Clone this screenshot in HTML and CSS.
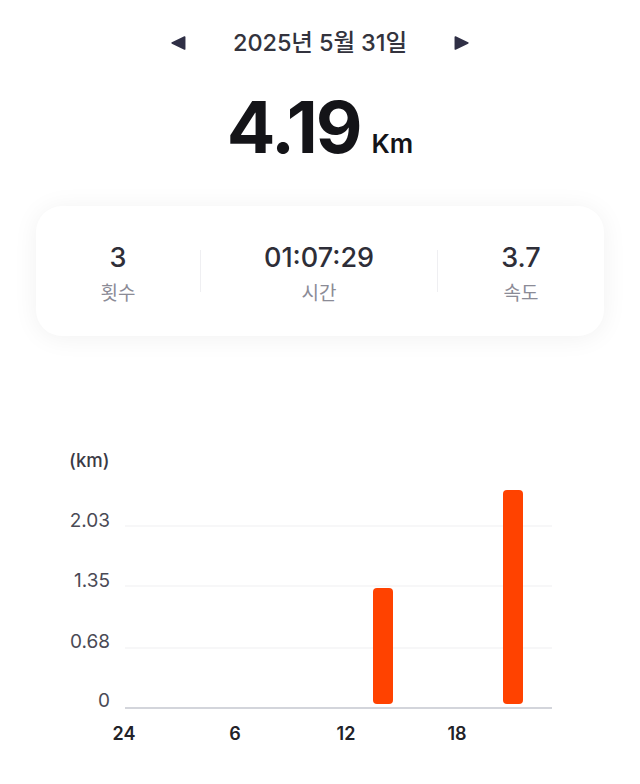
FILE: index.html
```html
<!DOCTYPE html>
<html lang="ko">
<head>
<meta charset="utf-8">
<title>일일 기록</title>
<link rel="stylesheet" href="styles.css">
</head>
<body>
<main class="screen">
  <header class="date-nav">
    <button class="arrow" aria-label="이전">
      <svg width="15" height="14" viewBox="0 0 14 13"><path d="M13.5 1v11c0 .7-.6 1-1.1.7L.8 7.1a.7.7 0 0 1 0-1.2L12.4.3c.5-.3 1.1 0 1.1.7z" fill="#2f2f45"/></svg>
    </button>
    <h1 class="date">2025년 5월 31일</h1>
    <button class="arrow" aria-label="다음">
      <svg width="15" height="14" viewBox="0 0 14 13"><path d="M.5 1v11c0 .7.6 1 1.1.7l11.6-5.6a.7.7 0 0 0 0-1.2L1.6.3C1.1 0 .5.3.5 1z" fill="#2f2f45"/></svg>
    </button>
  </header>

  <section class="distance">
    <span class="distance-value">4.19</span>
    <span class="distance-unit">Km</span>
  </section>

  <section class="card">
    <div class="stat stat-first">
      <div class="stat-value">3</div>
      <div class="stat-label">횟수</div>
    </div>
    <div class="divider"></div>
    <div class="stat stat-mid">
      <div class="stat-value">01:07:29</div>
      <div class="stat-label">시간</div>
    </div>
    <div class="divider"></div>
    <div class="stat stat-last">
      <div class="stat-value">3.7</div>
      <div class="stat-label">속도</div>
    </div>
  </section>

  <section class="chart">
    <svg class="chart-svg" width="640" height="320" viewBox="0 0 640 320">
      <text class="unit" x="69" y="27">(km)</text>
      <text class="ylab" x="110" y="87" text-anchor="end">2.03</text>
      <text class="ylab" x="110" y="147" text-anchor="end">1.35</text>
      <text class="ylab" x="110" y="208" text-anchor="end">0.68</text>
      <text class="ylab" x="110" y="267" text-anchor="end">0</text>
      <line class="grid" x1="125" y1="86" x2="552" y2="86"/>
      <line class="grid" x1="125" y1="146" x2="552" y2="146"/>
      <line class="grid" x1="125" y1="208" x2="552" y2="208"/>
      <line class="axis" x1="125" y1="268" x2="552" y2="268"/>
      <rect class="bar" x="373" y="148" width="20" height="116" rx="4"/>
      <rect class="bar" x="503" y="50" width="20" height="214" rx="4"/>
      <text class="xlab" x="124" y="300" text-anchor="middle">24</text>
      <text class="xlab" x="235" y="300" text-anchor="middle">6</text>
      <text class="xlab" x="346" y="300" text-anchor="middle">12</text>
      <text class="xlab" x="457" y="300" text-anchor="middle">18</text>
    </svg>
  </section>
</main>
</body>
</html>
```
FILE: styles.css
```css
* { box-sizing: border-box; }
html, body {
  margin: 0;
  padding: 0;
  background: #ffffff;
}
body {
  font-family: Inter, "Noto Sans CJK KR", sans-serif;
  color: #2e2e38;
  width: 640px;
  height: 784px;
  overflow: hidden;
}
.screen {
  display: flex;
  flex-direction: column;
}
.date-nav {
  display: flex;
  justify-content: center;
  align-items: center;
  gap: 47px;
  padding-top: 27px;
  height: 59px;
}
.arrow {
  border: 0;
  background: none;
  padding: 0;
  width: 15px;
  height: 14px;
  display: flex;
}
.date {
  margin: 0;
  font-family: Inter, "Noto Sans CJK KR", sans-serif;
  font-size: 23.5px;
  line-height: 32px;
  font-weight: 500;
  color: #33333d;
  letter-spacing: -0.1px;
}
.distance {
  display: flex;
  justify-content: center;
  align-items: baseline;
  gap: 11px;
  margin-top: 32px;
  height: 72px;
}
.distance-value {
  font-size: 72px;
  line-height: 72px;
  font-weight: 700;
  color: #141418;
  letter-spacing: -2px;
}
.distance-unit {
  font-size: 26px;
  font-weight: 600;
  color: #141418;
}
.card {
  margin: 43px 36px 0;
  height: 130px;
  background: #ffffff;
  border-radius: 26px;
  box-shadow: 0 2px 26px rgba(0, 0, 0, 0.06);
  display: flex;
  align-items: center;
}
.stat {
  display: flex;
  flex-direction: column;
  align-items: center;
  gap: 6px;
  padding-top: 4px;
}
.stat-first { width: 164px; }
.stat-mid { flex: 1; }
.stat-last { width: 166px; }
.divider {
  width: 1px;
  height: 42px;
  background: #efeff2;
}
.stat-value {
  font-size: 27px;
  line-height: 32px;
  font-weight: 500;
  color: #2e2e38;
}
.stat-label {
  font-family: "Noto Sans CJK KR", sans-serif;
  font-size: 19px;
  line-height: 24px;
  color: #8b8b96;
}
.chart {
  margin-top: 104px;
}
.chart-svg { display: block; }
.unit {
  font-family: Inter, sans-serif;
  font-size: 18.5px;
  font-weight: 500;
  fill: #3a3a45;
}
.ylab {
  font-family: Inter, sans-serif;
  font-size: 19px;
  font-weight: 400;
  fill: #4a4a55;
}
.xlab {
  font-family: Inter, sans-serif;
  font-size: 18px;
  font-weight: 600;
  fill: #222228;
}
.grid {
  stroke: #efeff1;
  stroke-width: 1;
}
.axis {
  stroke: #c5c7cf;
  stroke-width: 1.5;
}
.bar { fill: #ff4200; }
```
